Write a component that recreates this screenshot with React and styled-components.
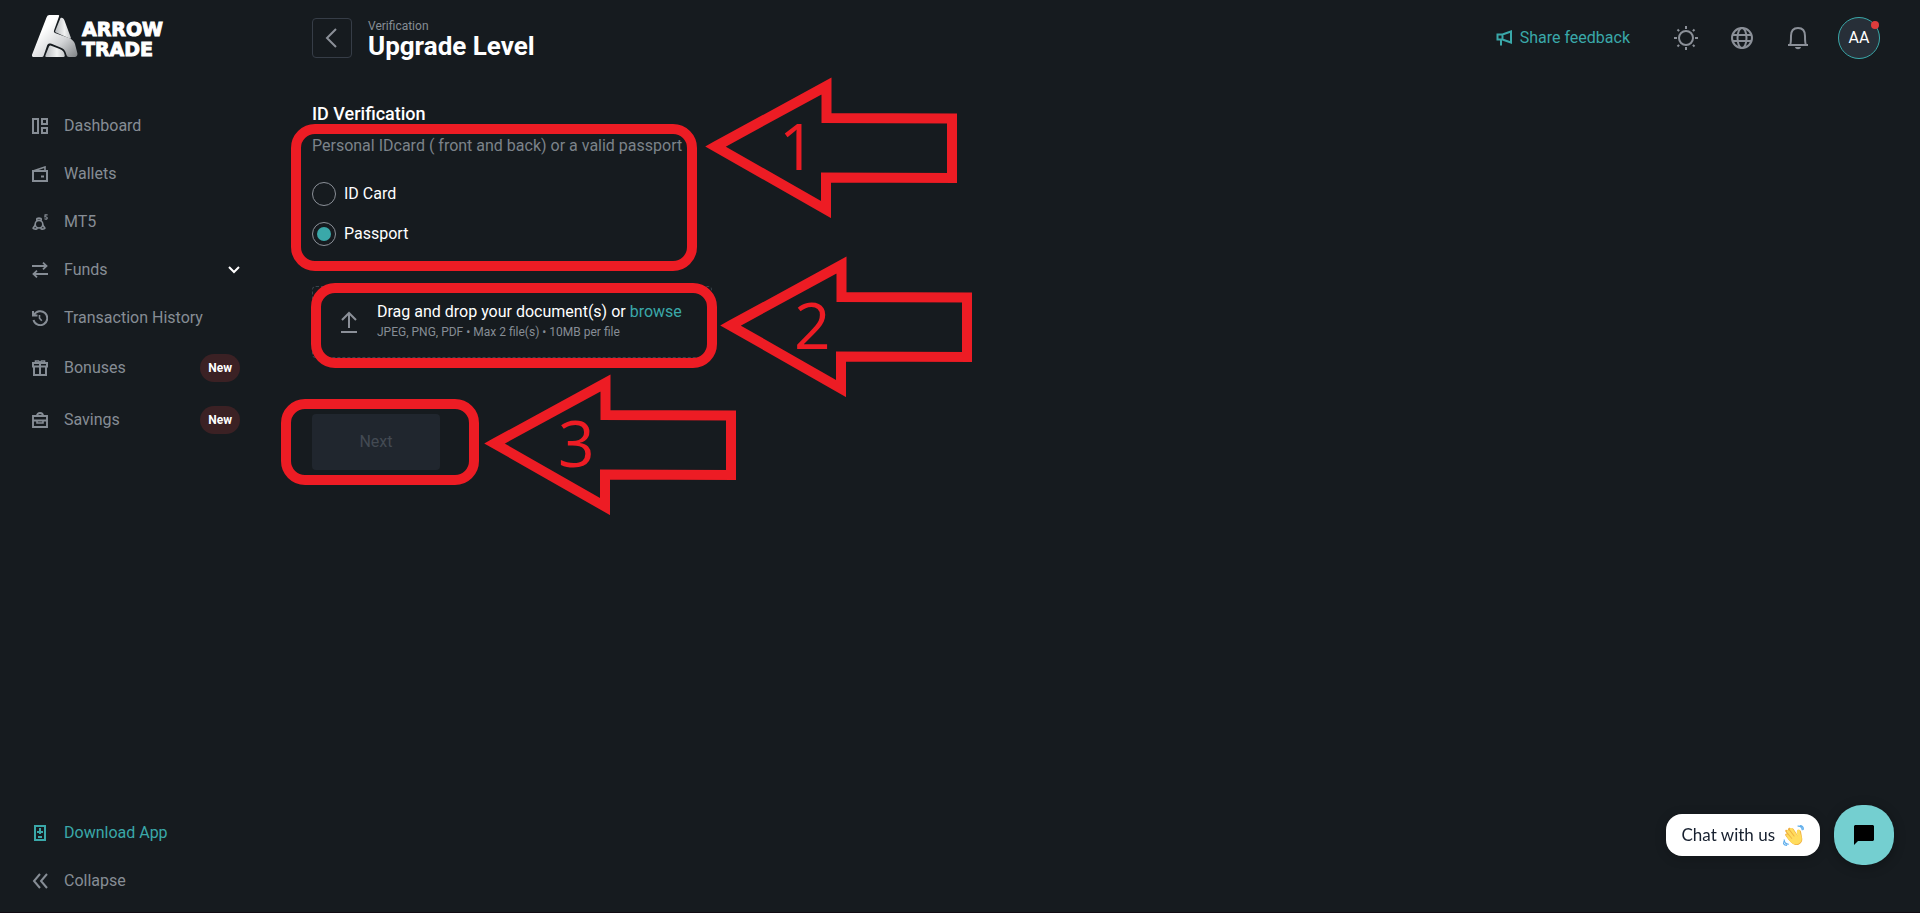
import { useState } from 'react'
import styled, { createGlobalStyle } from 'styled-components'

const GlobalStyle = createGlobalStyle`
    * {
        box-sizing: border-box;
    }
    body {
        margin: 0;
        background: #161b1f;
        color: #ffffff;
        font-family: Roboto, "Liberation Sans", sans-serif;
        font-size: 16px;
        line-height: 24px;
    }
    h1, h2, p, ul, fieldset {
        margin: 0;
        padding: 0;
        border: 0;
    }
    button {
        padding: 0;
        border: 0;
        background: none;
        color: inherit;
        font: inherit;
        cursor: pointer;
    }
    a {
        color: inherit;
        text-decoration: none;
    }
    svg {
        display: block;
        flex-shrink: 0;
    }
`

const Page = styled.div`
    display: flex;
    min-height: 100vh;
    box-shadow: inset 0 -1px #100b12;
`

const Sidebar = styled.aside`
    width: 288px;
    flex-shrink: 0;
    display: flex;
    flex-direction: column;
    padding: 15px 48px 8px 32px;
`

const Logo = styled.a`
    display: flex;
    align-items: center;
    gap: 4px;
    height: 43px;
    margin-bottom: 44px;
`

const LogoText = styled.span`
    padding-top: 4px;
    font-family: "DejaVu Sans", sans-serif;
    font-size: 19px;
    font-weight: 700;
    line-height: 20px;
    -webkit-text-stroke: 1px #ffffff;
`

const NavList = styled.ul`
    display: flex;
    flex-direction: column;
    list-style: none;
    flex: ${({ $grow }) => ($grow ? 1 : 'none')};
`

const NavLink = styled.a`
    display: flex;
    align-items: center;
    gap: 16px;
    width: 100%;
    padding: 12px 0;
    color: ${({ $accent }) => ($accent ? '#3aa8a9' : '#868d95')};
`

const NavLabel = styled.span`
    flex: 1;
    text-align: left;
    white-space: nowrap;
`

const NewBadge = styled.span`
    padding: 0 8px;
    border-radius: 14px;
    background: #3b2124;
    color: #ffffff;
    font-size: 12px;
    font-weight: 700;
    line-height: 28px;
`

const Main = styled.main`
    position: relative;
    flex: 1;
    padding: 0 40px 0 24px;
`

const Header = styled.header`
    display: flex;
    align-items: center;
    gap: 16px;
    height: 76px;
    margin-bottom: 26px;
`

const BackButton = styled.button`
    display: grid;
    place-items: center;
    width: 40px;
    height: 40px;
    border: 1px solid #363d47;
    border-radius: 4px;
    color: #8b9098;
`

const Titles = styled.div`
    flex: 1;
    padding-top: 4px;
`

const Eyebrow = styled.p`
    color: #868d95;
    font-size: 12px;
    line-height: 12px;
`

const PageTitle = styled.h1`
    font-size: 26px;
    font-weight: 700;
    line-height: 28px;
`

const Feedback = styled.a`
    display: flex;
    align-items: center;
    gap: 8px;
    margin-right: 12px;
    color: #3aa8a9;
`

const Tools = styled.div`
    display: flex;
    align-items: center;
`

const ToolButton = styled.button`
    padding: 16px;
    color: #8b9098;
`

const Avatar = styled.button`
    position: relative;
    width: 42px;
    height: 42px;
    margin-left: 12px;
    border: 1px solid #3aa8a9;
    border-radius: 50%;
    background: #272f38;

    &::after {
        content: '';
        position: absolute;
        top: 3px;
        right: 0;
        width: 8px;
        height: 8px;
        border-radius: 50%;
        background: #dd3c3c;
    }
`

const Form = styled.form`
    display: flex;
    flex-direction: column;
    align-items: flex-start;
`

const Heading = styled.h2`
    font-size: 18px;
    font-weight: 500;
    line-height: 24px;
`

const Hint = styled.p`
    margin: 8px 0 24px;
    color: #7c838a;
`

const Options = styled.fieldset`
    display: flex;
    flex-direction: column;
    gap: 16px;
    margin-bottom: 40px;
`

const Option = styled.label`
    display: flex;
    align-items: center;
    gap: 8px;
`

const Radio = styled.input`
    appearance: none;
    display: grid;
    place-items: center;
    width: 24px;
    height: 24px;
    margin: 0;
    border: 1px solid #8b9098;
    border-radius: 50%;

    &:checked::before {
        content: '';
        width: 14px;
        height: 14px;
        border-radius: 50%;
        background: #3aa8a9;
    }
`

const DropZone = styled.label`
    display: flex;
    align-items: center;
    gap: 16px;
    width: 400px;
    height: 72px;
    margin-bottom: 56px;
    padding: 0 24px;
    border: 1px dashed #3a434b;
    border-radius: 4px;
    color: #8b9098;
`

const FileInput = styled.input`
    position: absolute;
    width: 1px;
    height: 1px;
    opacity: 0;
`

const DropTitle = styled.p`
    color: #ffffff;
    line-height: 20px;

    span {
        color: #3aa8a9;
    }
`

const DropHint = styled.p`
    color: #868d95;
    font-size: 12px;
    line-height: 20px;
`

const NextButton = styled.button`
    width: 128px;
    height: 56px;
    border-radius: 4px;
    background: #20262e;
    color: #434a53;
`

const Outline = styled.div`
    position: absolute;
    top: ${({ $top }) => $top}px;
    left: ${({ $left }) => $left}px;
    width: ${({ $width }) => $width}px;
    height: ${({ $height }) => $height}px;
    border: 10px solid #ed1c24;
    border-radius: 24px;
    pointer-events: none;
`

const Pointer = styled.div`
    position: absolute;
    top: ${({ $top }) => $top}px;
    left: ${({ $left }) => $left}px;
    display: grid;
    align-items: center;
    pointer-events: none;

    > * {
        grid-area: 1 / 1;
    }
`

const StepNumber = styled.span`
    padding: 0 0 4px 74px;
    color: #ed1c24;
    font-family: "Open Sans", "Noto Sans", sans-serif;
    font-size: 64px;
    font-weight: 400;
    line-height: 64px;
`

const Chat = styled.div`
    position: fixed;
    right: 26px;
    bottom: 48px;
    display: flex;
    align-items: center;
    gap: 14px;
`

const ChatBubble = styled.button`
    display: flex;
    align-items: center;
    gap: 8px;
    height: 42px;
    padding: 0 16px;
    border-radius: 16px;
    background: #ffffff;
    box-shadow: 0 2px 12px rgba(0, 0, 0, 0.2);
    color: #17202f;
    font-family: Lato, sans-serif;
    font-size: 17px;
`

const ChatButton = styled.button`
    display: grid;
    place-items: center;
    width: 60px;
    height: 60px;
    border-radius: 28px;
    background: #74cfd0;
    box-shadow: 0 2px 12px rgba(0, 0, 0, 0.3);
    color: #000000;
`

function Icon({ size = 16, box = 16, stroke = 2, children }) {
    return (
        <svg width={size} height={size} viewBox={`0 0 ${box} ${box}`} fill="none" stroke="currentColor" strokeWidth={stroke} aria-hidden="true">
            {children}
        </svg>
    )
}

const icons = {
    dashboard: (
        <Icon>
            <path d="M1 1h5v14H1zM10 1h5v5h-5zM10 10h5v5h-5z" />
        </Icon>
    ),
    wallet: (
        <Icon>
            <path d="M1 5h14v10H1z" />
            <path d="M1 5l12-4v4" strokeWidth="1.6" />
            <path d="M9 10.5h3" />
        </Icon>
    ),
    mt5: (
        <Icon stroke="1.6">
            <circle cx="7" cy="10.2" r="3.8" />
            <path d="M4.8 6.8V5.2c0-1.4 4.4-1.4 4.4 0v1.6M3.5 10.8L1.2 14c-.5.8 3 2 4.3.2M10.5 10.8l2.3 3.2c.5.8-3 2-4.3.2" />
            <path d="M15.600.8h-2.500l-.2 2c2.900-.4 3 2.400.9 2.300-.6 0-1-.2-1.300-.5" strokeWidth="1.2" />
        </Icon>
    ),
    funds: (
        <Icon>
            <path d="M0 4h15M11 .7L14.5 4 11 7.3M16 12H1M5 8.7L1.5 12 5 15.3" strokeWidth="1.8" />
        </Icon>
    ),
    history: (
        <Icon>
            <path d="M2 5a7 7 0 1 1-.5 5" />
            <path d="M1 1v4.5h4.5" />
            <path d="M7.5 5v3.2l2.3 2.6" strokeWidth="1.6" />
        </Icon>
    ),
    bonuses: (
        <Icon>
            <path d="M1 3h14v3.500H1zM2 6.500V15h12V6.500M8 3v12" />
            <path d="M3.5 2V1h3L8 2.5 9.5 1h3v1" strokeWidth="1.6" />
        </Icon>
    ),
    savings: (
        <Icon>
            <path d="M1 4h14v11H1zM1 8.5h14M5 4c0-4 6-4 6 0" strokeWidth="1.9" />
            <path d="M5 8.5V11h6V8.5" strokeWidth="1.6" />
        </Icon>
    ),
    download: (
        <Icon>
            <path d="M3 1h10v14H3z" />
            <path d="M8 3v6M5 7h6M6 12h4" />
        </Icon>
    ),
    collapse: (
        <Icon>
            <path d="M8 1L2 8l6 7M15 1L9 8l6 7" />
        </Icon>
    ),
}

const menu = [
    { label: 'Dashboard', icon: 'dashboard' },
    { label: 'Wallets', icon: 'wallet' },
    { label: 'MT5', icon: 'mt5' },
    { label: 'Funds', icon: 'funds', expandable: true },
    { label: 'Transaction History', icon: 'history' },
    { label: 'Bonuses', icon: 'bonuses', isNew: true },
    { label: 'Savings', icon: 'savings', isNew: true },
]

const steps = [
    { outline: { $top: 124, $left: 3, $width: 406, $height: 147 }, pointer: { $top: 77, $left: 417 } },
    { outline: { $top: 283, $left: 23, $width: 406, $height: 85 }, pointer: { $top: 256, $left: 432 } },
    { outline: { $top: 399, $left: -7, $width: 198, $height: 86 }, pointer: { $top: 374, $left: 196 } },
]

function LogoMark() {
    return (
        <svg width="46" height="43" viewBox="0 0 46 43" aria-hidden="true">
            <defs>
                <linearGradient id="silver" x1="0" y1="0" x2="1" y2="1">
                    <stop offset="0.3" stopColor="#ffffff" />
                    <stop offset="0.65" stopColor="#d3d5d7" />
                    <stop offset="1" stopColor="#7e8285" />
                </linearGradient>
                <linearGradient id="silverSoft" x1="0" y1="0" x2="1" y2="0">
                    <stop offset="0" stopColor="#b9bcbf" />
                    <stop offset="0.6" stopColor="#f1f2f2" />
                    <stop offset="1" stopColor="#c4c7c9" />
                </linearGradient>
            </defs>
            <path fill="url(#silver)" d="M17.500 0H26c1 0 1.500.5 1 1.500l-5 14c-.4 1 0 2 1 2.400l14 5c3 1.200 5 3.300 6 6l2.300 9c.5 2-.5 4-2.500 4H37c-1.500 0-2-.8-2.500-2-1.300-5-3-6.500-6-7.500l-9-3.600c-2-.8-3.500-.3-4.300 1.500L11.500 41c-.4.8-1 1-2 1H2c-1.800 0-2.500-1-1.800-2.800L14.500 2.500C15.200.8 16 0 17.500 0z" />
            <path fill="url(#silverSoft)" d="M28.500 3c2-.5 3 .2 4 2.500l6.300 17c.3 1-.2 1.500-1.200 1L24 17.500c-.8-.3-1-1-.7-1.800z" />
            <path fill="url(#silverSoft)" d="M17 31.500c.5-1 1.200-1.200 2.200-.8l8.500 3.400c3 1.200 4.500 3 5 6.200.2 1-.2 1.700-1.200 1.700H14.500c-1 0-1.500-.6-1.100-1.500z" />
        </svg>
    )
}

function WavingHand() {
    return (
        <svg width="21" height="21" viewBox="0 0 36 36" aria-hidden="true">
            <path fill="#efb042" d="M4 18c-1-2 1-4 3-3L4 11c-1-3 2-4 4-2l1-3c1-2 4-1 5 1l1-1c2-1 3 1 4 2l7 11-1-7c0-4 5-5 6 0l2 11c1 8-7 13-13 11-5-2-11-9-16-16z" />
            <path fill="#ffdc5d" d="M5 17c1-2 3-1 4 0l6 7 1-1-9-11c-2-3 1-5 4-2l8 10 1-1-8-11c-1-3 2-4 4-2l10 14c-2-4-3-8-2-11 1-2 5-2 5 1 0 6 4 9 3 15-1 7-9 10-15 7-5-3-9-9-12-15z" />
            <path fill="none" stroke="#5dadec" strokeWidth="2" d="M2 25c0 5 3 8 8 8M0 28c0 4 3 7 7 7M25 2c5-1 8 3 8 7M29 1c4 0 6 3 6 7" />
        </svg>
    )
}

function App() {
    const [documentType, setDocumentType] = useState('passport')

    return (
        <>
            <GlobalStyle />
            <Page>
                <Sidebar>
                    <Logo href="#">
                        <LogoMark />
                        <LogoText>ARROW<br />TRADE</LogoText>
                    </Logo>
                    <NavList $grow>
                        {menu.map((item) => (
                            <li key={item.label}>
                                <NavLink as={item.expandable ? 'button' : 'a'} href={item.expandable ? undefined : '#'}>
                                    {icons[item.icon]}
                                    <NavLabel>{item.label}</NavLabel>
                                    {item.isNew && <NewBadge>New</NewBadge>}
                                    {item.expandable && (
                                        <svg width="12" height="12" viewBox="0 0 12 12" fill="none" stroke="#ffffff" strokeWidth="2" aria-hidden="true">
                                            <path d="M1 3l5 5 5-5" />
                                        </svg>
                                    )}
                                </NavLink>
                            </li>
                        ))}
                    </NavList>
                    <NavList>
                        <li>
                            <NavLink href="#" $accent>
                                {icons.download}
                                <NavLabel>Download App</NavLabel>
                            </NavLink>
                        </li>
                        <li>
                            <NavLink as="button">
                                {icons.collapse}
                                <NavLabel>Collapse</NavLabel>
                            </NavLink>
                        </li>
                    </NavList>
                </Sidebar>

                <Main>
                    <Header>
                        <BackButton aria-label="Back">
                            <Icon size={20} box={20}>
                                <path d="M14 1L5 10l9 9" />
                            </Icon>
                        </BackButton>
                        <Titles>
                            <Eyebrow>Verification</Eyebrow>
                            <PageTitle>Upgrade Level</PageTitle>
                        </Titles>
                        <Feedback href="#">
                            <Icon>
                                <path d="M1.500 4.500h5L15 1.500v11L6.500 9.500h-5zM5 9.500v6M6.500 4.500v5" />
                            </Icon>
                            Share feedback
                        </Feedback>
                        <Tools>
                            <ToolButton aria-label="Theme">
                                <Icon size={24} box={24}>
                                    <circle cx="12" cy="12" r="7" />
                                    <path d="M12 0v3M12 21v3M0 12h3M21 12h3M3.500 3.500l1.600 1.600M18.900 18.900l1.600 1.600M3.500 20.500l1.600-1.600M18.900 5.100l1.600-1.600" />
                                </Icon>
                            </ToolButton>
                            <ToolButton aria-label="Language">
                                <Icon size={24} box={24}>
                                    <circle cx="12" cy="12" r="10" />
                                    <ellipse cx="12" cy="12" rx="4.500" ry="10" />
                                    <path d="M3 9h18M3 15h18" />
                                </Icon>
                            </ToolButton>
                            <ToolButton aria-label="Notifications">
                                <Icon size={24} box={24}>
                                    <path d="M2 19h20M4 19c1-1.500 1-4 1-9 0-5 2-8 7-8s7 3 7 8c0 5 0 7.500 1 9" />
                                    <path d="M9 21h6c-.5 3-5.500 3-6 0z" fill="currentColor" stroke="none" />
                                </Icon>
                            </ToolButton>
                            <Avatar>AA</Avatar>
                        </Tools>
                    </Header>

                    <Form>
                        <Heading>ID Verification</Heading>
                        <Hint>Personal IDcard ( front and back) or a valid passport</Hint>
                        <Options aria-label="Document type">
                            <Option>
                                <Radio type="radio" name="document" checked={documentType === 'card'} onChange={() => setDocumentType('card')} />
                                ID Card
                            </Option>
                            <Option>
                                <Radio type="radio" name="document" checked={documentType === 'passport'} onChange={() => setDocumentType('passport')} />
                                Passport
                            </Option>
                        </Options>
                        <DropZone>
                            <FileInput type="file" multiple />
                            <Icon size={24} box={24}>
                                <path d="M4 22h16M12 18V3M5 10l7-7 7 7" />
                            </Icon>
                            <div>
                                <DropTitle>Drag and drop your document(s) or <span>browse</span></DropTitle>
                                <DropHint>JPEG, PNG, PDF • Max 2 file(s) • 10MB per file</DropHint>
                            </div>
                        </DropZone>
                        <NextButton type="submit" disabled>Next</NextButton>
                    </Form>

                    {steps.map(({ outline, pointer }, index) => (
                        <div key={index}>
                            <Outline {...outline} />
                            <Pointer {...pointer}>
                                <svg width="253" height="141" viewBox="0 0 253 141" fill="none" stroke="#ed1c24" strokeWidth="10" strokeMiterlimit="10" aria-hidden="true">
                                    <path d="M10.500 69.500L121.500 9v32l125.500.5v59.500l-126-.5v32z" />
                                </svg>
                                <StepNumber>{index + 1}</StepNumber>
                            </Pointer>
                        </div>
                    ))}
                </Main>
            </Page>

            <Chat>
                <ChatBubble>
                    Chat with us
                    <WavingHand />
                </ChatBubble>
                <ChatButton aria-label="Open chat">
                    <svg width="20" height="20" viewBox="0 0 20 20" fill="currentColor" aria-hidden="true">
                        <path d="M1 0h18l1 1v14l-1 1H4l-4 4V1z" />
                    </svg>
                </ChatButton>
            </Chat>
        </>
    )
}

export default App
